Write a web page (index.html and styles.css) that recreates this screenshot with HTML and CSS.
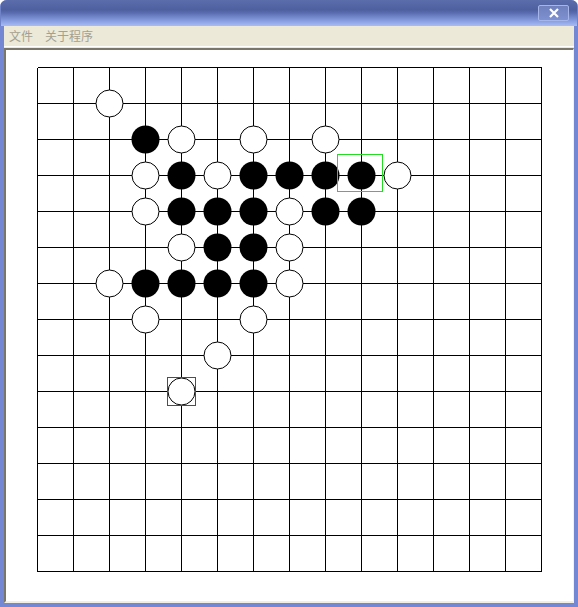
FILE: index.html
```html
<!DOCTYPE html>
<html>
<head>
<meta charset="utf-8">
<link rel="stylesheet" href="styles.css">
</head>
<body>
<div class="window">
  <div class="titlebar">
    <div class="close-btn">
      <svg width="14" height="10" viewBox="0 0 14 10"><path d="M3 1 L11 9 M11 1 L3 9" stroke="#fff" stroke-width="2.2" fill="none"/></svg>
    </div>
  </div>
  <div class="body-frame">
    <div class="menubar">
      <span class="menu-item">文件</span>
      <span class="menu-item">关于程序</span>
    </div>
    <div class="client">
      <svg class="board" width="567" height="550" viewBox="6 50 567 550" id="board"></svg>
    </div>
  </div>
</div>
<script src="board.js"></script>
</body>
</html>
```
FILE: board.js
```js
(function () {
  var svg = document.getElementById('board');
  var NS = 'http://www.w3.org/2000/svg';
  var X0 = 37, Y0 = 67, S = 36, N = 15;
  function el(name, attrs) {
    var e = document.createElementNS(NS, name);
    for (var k in attrs) e.setAttribute(k, attrs[k]);
    svg.appendChild(e);
    return e;
  }
  var d = '';
  for (var i = 0; i < N; i++) {
    var x = X0 + i * S + 0.5, y = Y0 + i * S + 0.5;
    d += 'M' + x + ' ' + (Y0 + 0.5) + 'V' + (Y0 + (N - 1) * S + 0.5);
    d += 'M' + (X0 + 0.5) + ' ' + y + 'H' + (X0 + (N - 1) * S + 0.5);
  }
  el('path', { d: d, stroke: '#000', 'stroke-width': 1, fill: 'none', 'shape-rendering': 'crispEdges' });
  var W = [[2,1],[4,2],[6,2],[8,2],[3,3],[5,3],[10,3],[3,4],[7,4],[4,5],[7,5],[2,6],[7,6],[3,7],[6,7],[5,8],[4,9]];
  var B = [[3,2],[4,3],[6,3],[7,3],[8,3],[9,3],[4,4],[5,4],[6,4],[8,4],[9,4],[5,5],[6,5],[3,6],[4,6],[5,6],[6,6]];
  W.forEach(function (p) {
    el('circle', { cx: X0 + p[0] * S + 0.5, cy: Y0 + p[1] * S + 0.5, r: 13.5, fill: '#fff', stroke: '#000', 'stroke-width': 1 });
  });
  B.forEach(function (p) {
    el('circle', { cx: X0 + p[0] * S + 0.5, cy: Y0 + p[1] * S + 0.5, r: 14, fill: '#000' });
  });
  el('rect', { x: 337.5, y: 154.5, width: 45, height: 37, fill: 'none', stroke: '#22dd22', 'stroke-width': 1, 'shape-rendering': 'crispEdges' });
  el('rect', { x: 167.5, y: 377.5, width: 28, height: 28, fill: 'none', stroke: '#dd1111', 'stroke-width': 1, 'shape-rendering': 'crispEdges' });
})();
```
FILE: styles.css
```css
html, body {
  margin: 0;
  padding: 0;
  background: #ffffff;
}
.window {
  width: 578px;
  height: 607px;
  display: flex;
  flex-direction: column;
  background: #7387d2;
  border-radius: 7px 7px 0 0;
  overflow: hidden;
}
.titlebar {
  height: 26px;
  flex: none;
  display: flex;
  justify-content: flex-end;
  align-items: flex-start;
  padding: 5px 8px 0 0;
  box-sizing: border-box;
  background: linear-gradient(#5b6dab 0px, #4e609f 10px, #5a6db0 13px, #7d92d6 19px, #9bb0ee 24px, #a9bcf2 26px);
  border-left: 1px solid #6f82c8;
  border-right: 1px solid #6f82c8;
}
.close-btn {
  width: 29px;
  height: 14px;
  border: 1px solid #a6b6ea;
  border-radius: 2px;
  background: linear-gradient(#6f80bd, #7e91d0);
  display: flex;
  align-items: center;
  justify-content: center;
}
.body-frame {
  flex: 1;
  display: flex;
  flex-direction: column;
  margin: 0 4px 4px 4px;
  background: #ece9d8;
}
.menubar {
  height: 20px;
  flex: none;
  display: flex;
  align-items: center;
  gap: 12px;
  padding-left: 5px;
  font-family: "Noto Sans CJK SC", sans-serif;
  font-size: 12px;
  color: #a3a08f;
  border-bottom: 1px solid #ffffff;
}
.menu-item {
  line-height: 20px;
}
.client {
  flex: 1;
  margin-top: 1px;
  background: #ffffff;
  border-top: 2px solid #7a776a;
  border-left: 2px solid #7a776a;
  border-right: 1px solid #f4f2ea;
  border-bottom: 2px solid #f1efe2;
  overflow: hidden;
}
.board {
  display: block;
}
```
